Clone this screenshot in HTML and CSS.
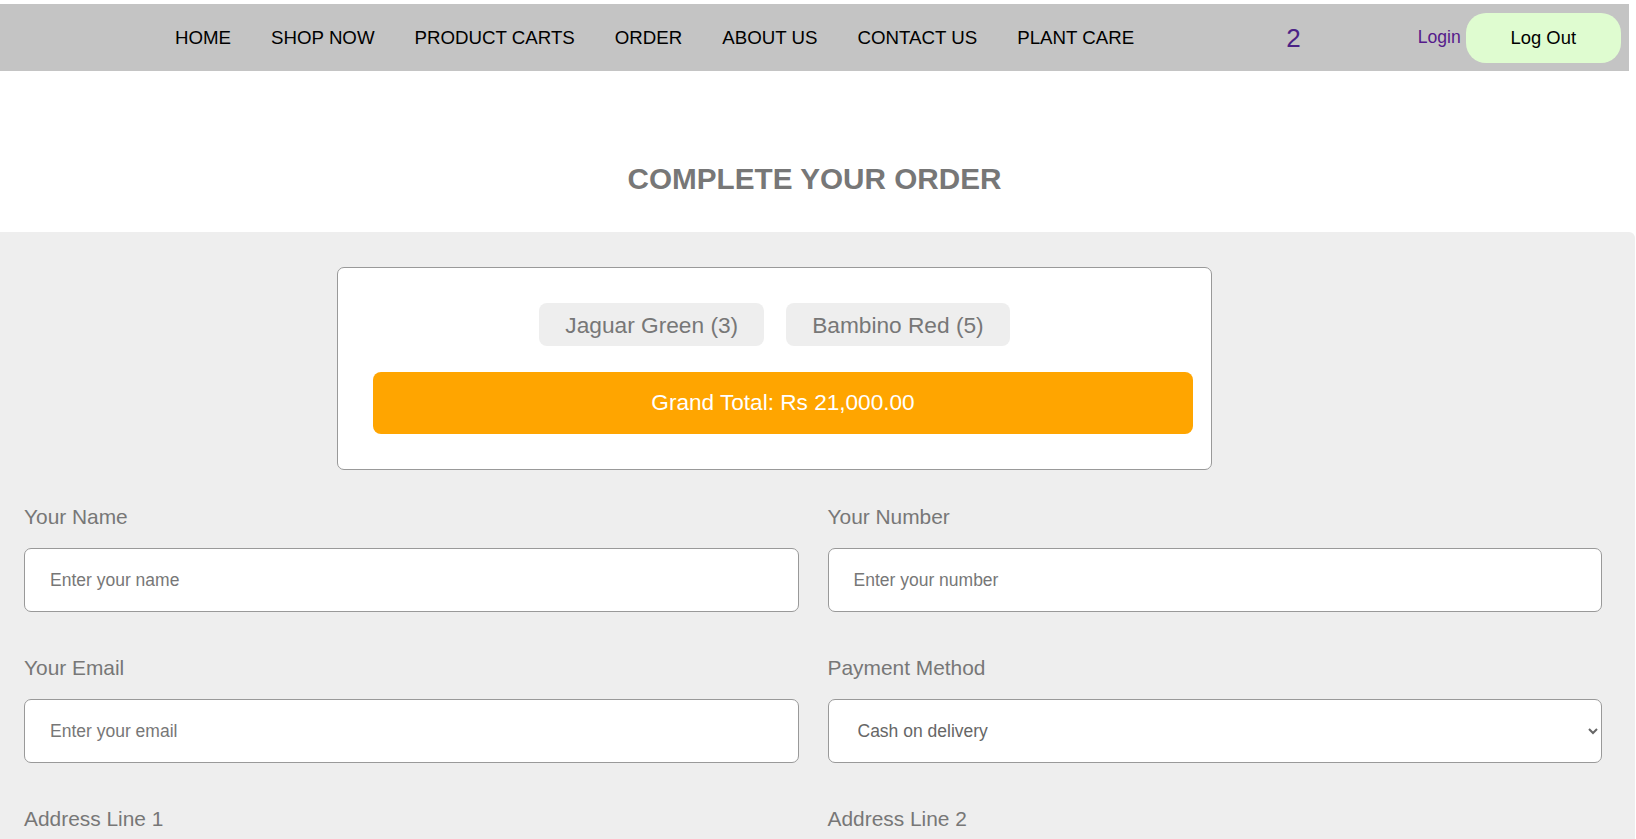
FILE: index.html
```html
<!DOCTYPE html>
<html lang="en">
<head>
<meta charset="utf-8">
<title>Complete Your Order</title>
<link rel="stylesheet" href="styles.css">
</head>
<body>
<header class="topbar">
  <nav class="nav">
    <ul class="nav-links">
      <li><a href="#">HOME</a></li>
      <li><a href="#">SHOP NOW</a></li>
      <li><a href="#">PRODUCT CARTS</a></li>
      <li><a href="#">ORDER</a></li>
      <li><a href="#">ABOUT US</a></li>
      <li><a href="#">CONTACT US</a></li>
      <li><a href="#">PLANT CARE</a></li>
    </ul>
    <span class="cart-count">2</span>
    <a class="login" href="#">Login</a>
    <button class="logout" type="button">Log Out</button>
  </nav>
</header>

<div class="heading">
  <h2 class="title">COMPLETE YOUR ORDER</h2>
</div>

<section class="checkout">
  <div class="summary">
    <div class="items">
      <span class="pill">Jaguar Green (3)</span>
      <span class="pill">Bambino Red (5)</span>
    </div>
    <div class="total">Grand Total: Rs 21,000.00</div>
  </div>

  <form class="order-form">
    <div class="field">
      <label class="label">Your Name</label>
      <input class="control" type="text" placeholder="Enter your name">
    </div>
    <div class="field">
      <label class="label">Your Number</label>
      <input class="control" type="text" placeholder="Enter your number">
    </div>
    <div class="field">
      <label class="label">Your Email</label>
      <input class="control" type="email" placeholder="Enter your email">
    </div>
    <div class="field">
      <label class="label">Payment Method</label>
      <select class="control select">
        <option>Cash on delivery</option>
        <option>Credit card</option>
      </select>
    </div>
    <div class="field">
      <label class="label">Address Line 1</label>
      <input class="control" type="text" placeholder="e.g. flat no.">
    </div>
    <div class="field">
      <label class="label">Address Line 2</label>
      <input class="control" type="text" placeholder="e.g. street name">
    </div>
  </form>
</section>
</body>
</html>
```

FILE: styles.css
```css
* {
  box-sizing: border-box;
}

html, body {
  margin: 0;
  padding: 0;
  background: #ffffff;
  font-family: "Liberation Sans", Arial, sans-serif;
}

.topbar {
  padding-top: 4px;
}

.nav {
  display: flex;
  align-items: center;
  height: 67px;
  margin-right: 7px;
  padding-left: 175px;
  padding-right: 8px;
  background: #c4c4c4;
  white-space: nowrap;
}

.nav > * {
  flex-shrink: 0;
}

.nav-links {
  display: flex;
  gap: 40px;
  margin: 0;
  padding: 0;
  list-style: none;
}

.nav-links a {
  color: #000000;
  text-decoration: none;
  font-size: 18.7px;
}

.cart-count {
  margin-left: 152px;
  color: #4b2386;
  font-size: 26px;
  line-height: 30px;
}

.login {
  margin-left: 117px;
  color: #551a8b;
  font-size: 17.6px;
  text-decoration: none;
}

.logout {
  margin-left: 5px;
  width: 155px;
  height: 50px;
  border: none;
  border-radius: 20px;
  background: #dffcd0;
  color: #000000;
  font-family: "Liberation Sans", Arial, sans-serif;
  font-size: 18.4px;
}

.heading {
  height: 161px;
  padding-top: 90px;
}

.title {
  margin: 0;
  width: 1629px;
  text-align: center;
  color: #777777;
  font-size: 29.7px;
  line-height: 36px;
  font-weight: bold;
}

.checkout {
  margin-right: 1px;
  padding: 35px 33px 40px 24px;
  background: #eeeeee;
  border-top-right-radius: 6px;
}

.summary {
  width: 875px;
  margin-left: 313px;
  padding: 35px;
  background: #ffffff;
  border: 1px solid #999999;
  border-radius: 7px;
}

.items {
  display: flex;
  justify-content: center;
  gap: 22px;
}

.pill {
  padding: 8.5px 26px;
  background: #eeeeee;
  border-radius: 8px;
  color: #777777;
  font-size: 22.7px;
  line-height: 26px;
}

.total {
  display: flex;
  align-items: center;
  justify-content: center;
  height: 62px;
  margin-top: 26px;
  margin-right: -17px;
  background: #ffa500;
  border-radius: 8px;
  color: #ffffff;
  font-size: 22.6px;
}

.order-form {
  display: grid;
  grid-template-columns: 1fr 1fr;
  column-gap: 29px;
  row-gap: 44px;
  margin-top: 35px;
}

.field {
  display: flex;
  flex-direction: column;
}

.label {
  margin-bottom: 19px;
  color: #777777;
  font-size: 20.9px;
  line-height: 24px;
}

.control {
  width: 100%;
  height: 64px;
  padding: 0 25px;
  background: #ffffff;
  border: 1px solid #999999;
  border-radius: 7px;
  color: #666666;
  font-family: "Liberation Sans", Arial, sans-serif;
  font-size: 17.5px;
}

.control::placeholder {
  color: #777777;
}

.select {
  height: 64.5px;
  margin-top: -0.5px;
}
```
